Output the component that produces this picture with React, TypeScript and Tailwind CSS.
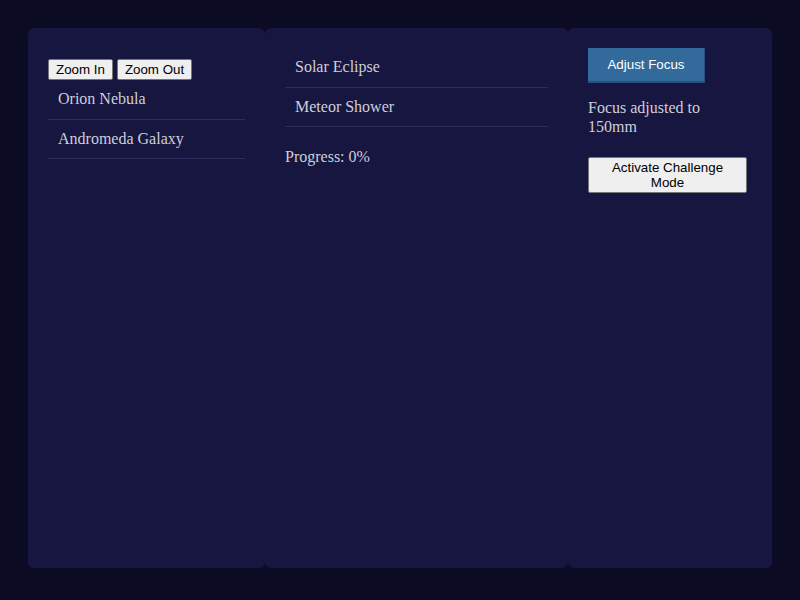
import React from "react";

const serif = { fontFamily: '"Liberation Serif", "Times New Roman", serif' };

function Item({ children }: { children: React.ReactNode }) {
  return (
    <li className="px-[10px] py-[10px] border-b border-[#2c2c5c] text-[16px] leading-[18.5px] text-[#cfcfd6]">
      {children}
    </li>
  );
}

const grayBtn =
  "bg-[#efefef] border border-[#767676] rounded-[2px] text-black text-[13.33px] leading-[15px] px-[7px] py-[2px] [font-family:'Liberation_Sans',Arial,sans-serif]";

export default function App() {
  return (
    <div className="w-[800px] h-[600px] bg-[#0b0b23] pt-[28px] px-[28px]" style={serif}>
      <div className="flex h-[540px]">
        <div className="w-[237px] h-full bg-[#161640] rounded-[6px] p-[20px]">
          <div className="mt-[11px] flex gap-[4px]">
            <button className={grayBtn}>Zoom In</button>
            <button className={grayBtn}>Zoom Out</button>
          </div>
          <ul>
            <Item>Orion Nebula</Item>
            <Item>Andromeda Galaxy</Item>
          </ul>
        </div>
        <div className="w-[303px] h-full bg-[#161640] rounded-[6px] p-[20px]">
          <ul>
            <Item>Solar Eclipse</Item>
            <Item>Meteor Shower</Item>
          </ul>
          <p className="mt-[21px] text-[16px] leading-[18.5px] text-[#cfcfd6]">Progress: 0%</p>
        </div>
        <div className="w-[204px] h-full bg-[#161640] rounded-[6px] p-[20px]">
          <button className="w-[117px] h-[35px] bg-[#336a9c] border-b-2 border-r border-[#2a4f7c] text-white text-[13.33px] [font-family:'Liberation_Sans',Arial,sans-serif]">
            Adjust Focus
          </button>
          <p className="mt-[16px] text-[16px] leading-[18.5px] text-[#cfcfd6]">
            Focus adjusted to 150mm
          </p>
          <button className={grayBtn + " mt-[21px] w-[159px] block"}>
            Activate Challenge Mode
          </button>
        </div>
      </div>
    </div>
  );
}
